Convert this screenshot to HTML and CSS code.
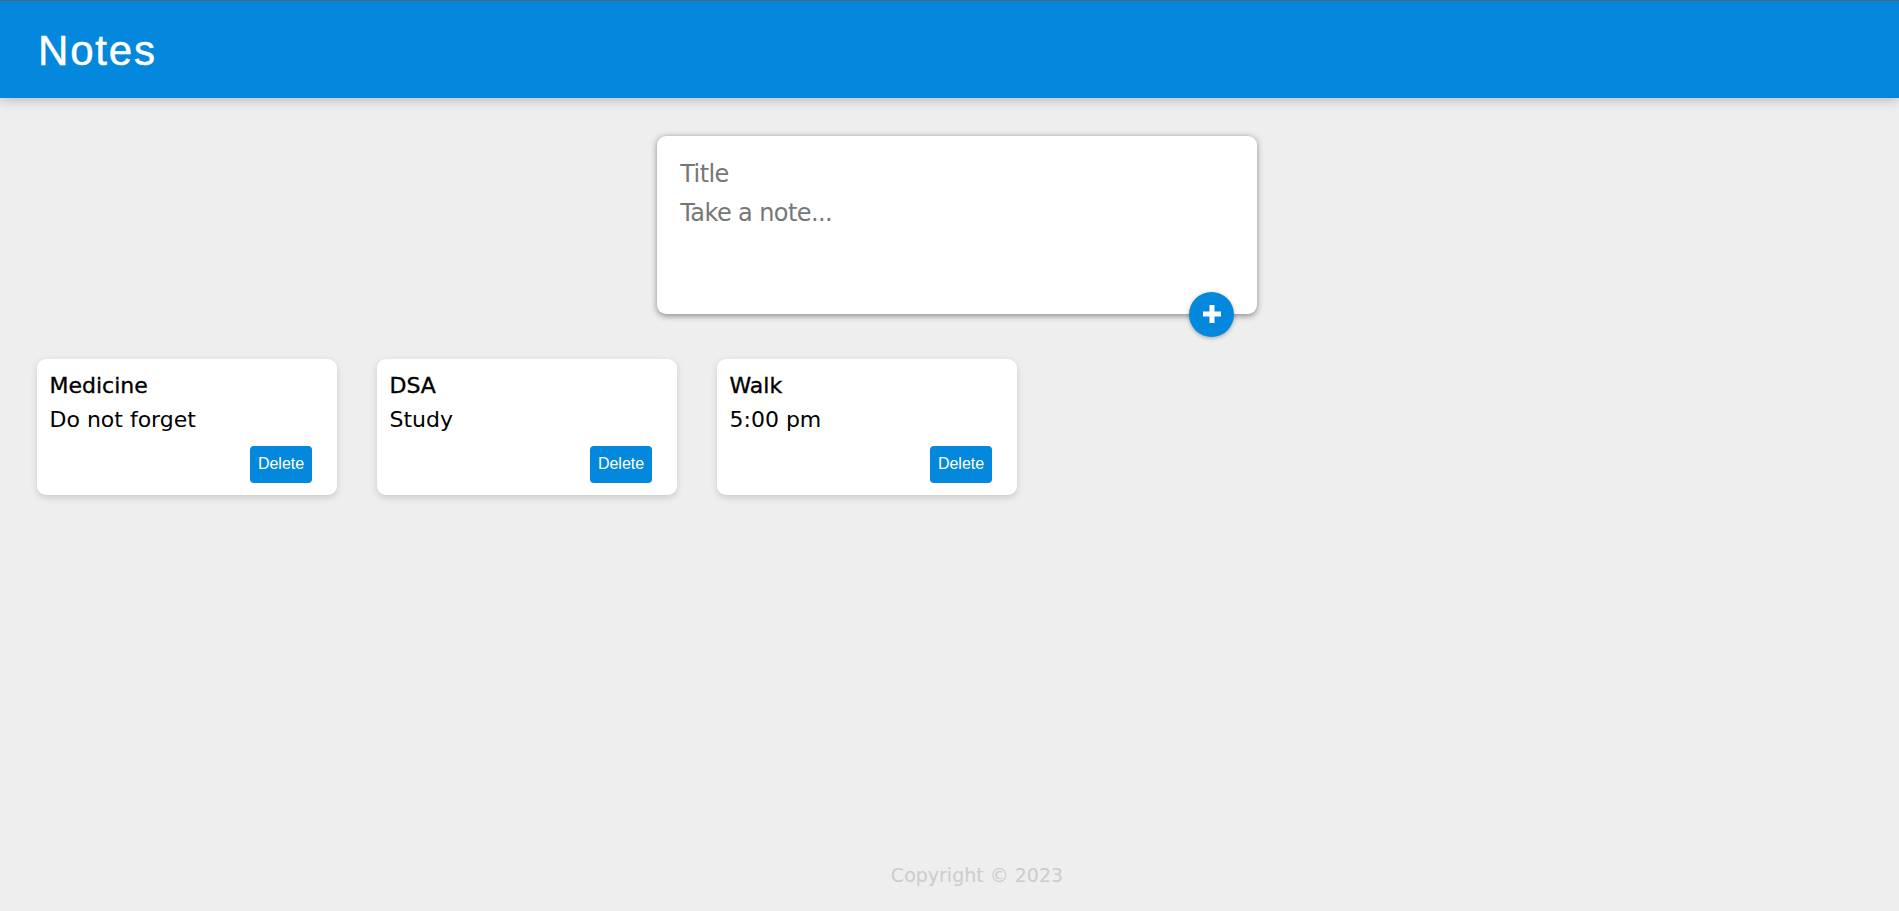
FILE: index.html
```html
<!DOCTYPE html>
<html lang="en">
<head>
<meta charset="utf-8">
<title>Notes</title>
<link rel="stylesheet" href="styles.css">
</head>
<body>
  <header class="app-header">
    <h1 class="app-title">Notes</h1>
  </header>
  <main class="main">
    <form class="create-note">
      <input class="create-title" type="text" name="title" placeholder="Title">
      <textarea class="create-content" name="content" rows="3" placeholder="Take a note..."></textarea>
      <button class="add-btn" type="button" aria-label="Add">
        <svg width="18" height="18" viewBox="0 0 18 18"><path d="M6.5 0h5v6.5H18v5h-6.5V18h-5v-6.5H0v-5h6.5z" fill="#fff"/></svg>
      </button>
    </form>
    <section class="notes">
      <div class="note">
        <h2 class="note-title">Medicine</h2>
        <p class="note-text">Do not forget</p>
        <button class="delete-btn" type="button">Delete</button>
      </div>
      <div class="note">
        <h2 class="note-title">DSA</h2>
        <p class="note-text">Study</p>
        <button class="delete-btn" type="button">Delete</button>
      </div>
      <div class="note">
        <h2 class="note-title">Walk</h2>
        <p class="note-text">5:00 pm</p>
        <button class="delete-btn" type="button">Delete</button>
      </div>
    </section>
  </main>
  <footer class="app-footer">
    <p class="copyright">Copyright © 2023</p>
  </footer>
</body>
</html>
```
FILE: styles.css
```css
html, body {
  margin: 0;
  padding: 0;
}
body {
  background: #eeeeee;
  font-family: "DejaVu Sans", sans-serif;
  min-height: 100vh;
  display: flex;
  flex-direction: column;
  box-sizing: border-box;
  overflow: hidden;
}
.app-header {
  box-sizing: border-box;
  height: 98px;
  border-top: 1px solid #56646e;
  background: #0388dd;
  padding: 26px 40px 0 38px;
  box-shadow: 0 0 12.5px 0 rgba(0, 0, 0, 0.3);
  position: relative;
  z-index: 1;
}
.app-title {
  margin: 0;
  color: #fff;
  font-family: "Liberation Sans", Arial, sans-serif;
  font-weight: 400;
  font-size: 42px;
  line-height: 47px;
  letter-spacing: 1.8px;
  -webkit-text-stroke: 0.5px #fff;
}
.main {
  padding-left: 14px;
}
.create-note {
  position: relative;
  box-sizing: border-box;
  width: 600px;
  height: 178px;
  margin: 38px auto 0 auto;
  background: #fff;
  padding: 18.75px;
  border-radius: 9px;
  box-shadow: 0 1.25px 6.25px rgb(138, 137, 137);
}
.create-title,
.create-content {
  display: block;
  box-sizing: border-box;
  width: 100%;
  border: none;
  outline: none;
  padding: 5px;
  margin: 0;
  font-family: "DejaVu Sans", sans-serif;
  font-size: 24px;
  line-height: 28px;
  color: #333;
  background: transparent;
  resize: none;
}
.create-title::placeholder,
.create-content::placeholder {
  color: #777777;
  letter-spacing: -0.6px;
}
.create-content {
  height: 94px;
  padding-top: 6px;
}
.add-btn {
  position: absolute;
  right: 22.5px;
  bottom: -22.5px;
  width: 45px;
  height: 45px;
  border: none;
  border-radius: 50%;
  background: #0388dd;
  box-shadow: 0 1.25px 4px rgba(0, 0, 0, 0.3);
  padding: 0;
  display: flex;
  align-items: center;
  justify-content: center;
}
.notes {
  display: flex;
  flex-wrap: wrap;
  gap: 40px;
  margin-top: 45px;
  padding-left: 23px;
}
.note {
  box-sizing: border-box;
  width: 300px;
  background: #fff;
  border-radius: 9px;
  box-shadow: 0 2.5px 6px #cccccc;
  padding: 12.5px;
}
.note-title {
  margin: 0 0 7.5px 0;
  font-size: 22px;
  line-height: 27px;
  font-weight: 400;
  color: #000;
  -webkit-text-stroke: 0.35px #000;
}
.note-text {
  margin: 0 0 12.5px 0;
  font-size: 22px;
  line-height: 27px;
  color: #000;
}
.delete-btn {
  display: block;
  margin: 0 12.5px 0 auto;
  width: 62px;
  height: 37px;
  border: none;
  border-radius: 4px;
  background: #0388dd;
  color: #fff;
  font-family: "Liberation Sans", Arial, sans-serif;
  font-size: 16px;
  padding: 0;
}
.app-footer {
  margin-top: auto;
  padding: 0 0 25px 55px;
  text-align: center;
}
.copyright {
  margin: 0;
  color: #cccccc;
  font-size: 19px;
  line-height: 22px;
}
```
